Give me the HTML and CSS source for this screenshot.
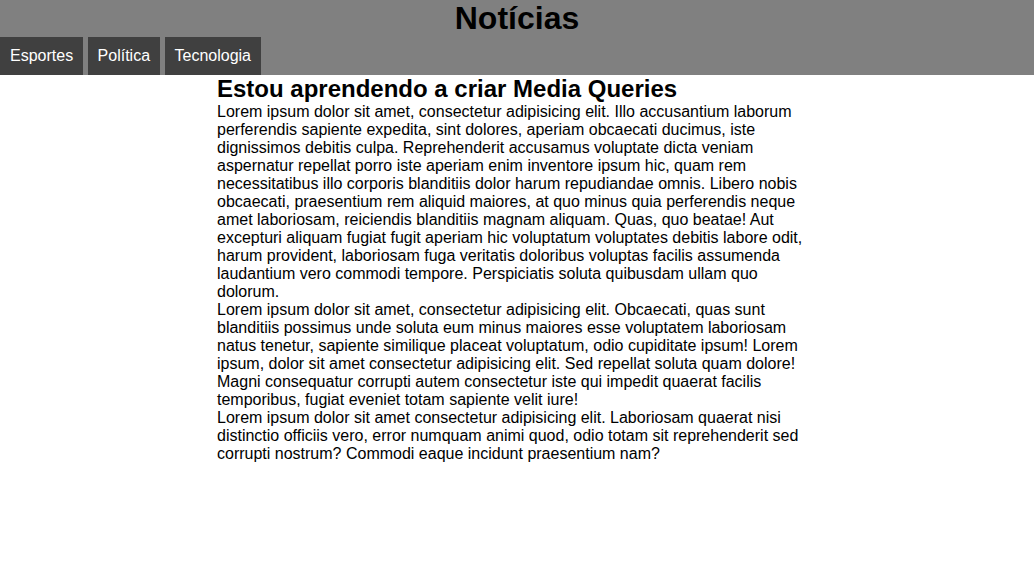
FILE: index.html
```html
<!DOCTYPE html>
<html lang="pt-BR">
<head>
<meta charset="utf-8">
<title>Notícias</title>
<link rel="stylesheet" href="styles.css">
</head>
<body>
<header class="topo">
  <h1 class="titulo">Notícias</h1>
  <nav class="menu"><a class="item" href="#">Esportes</a> <a class="item" href="#">Política</a> <a class="item" href="#">Tecnologia</a></nav>
</header>
<main class="conteudo">
  <h2 class="subtitulo">Estou aprendendo a criar Media Queries</h2>
  <p class="texto">Lorem ipsum dolor sit amet, consectetur adipisicing elit. Illo accusantium laborum perferendis sapiente expedita, sint dolores, aperiam obcaecati ducimus, iste dignissimos debitis culpa. Reprehenderit accusamus voluptate dicta veniam aspernatur repellat porro iste aperiam enim inventore ipsum hic, quam rem necessitatibus illo corporis blanditiis dolor harum repudiandae omnis. Libero nobis obcaecati, praesentium rem aliquid maiores, at quo minus quia perferendis neque amet laboriosam, reiciendis blanditiis magnam aliquam. Quas, quo beatae! Aut excepturi aliquam fugiat fugit aperiam hic voluptatum voluptates debitis labore odit, harum provident, laboriosam fuga veritatis doloribus voluptas facilis assumenda laudantium vero commodi tempore. Perspiciatis soluta quibusdam ullam quo dolorum.</p>
  <p class="texto">Lorem ipsum dolor sit amet, consectetur adipisicing elit. Obcaecati, quas sunt blanditiis possimus unde soluta eum minus maiores esse voluptatem laboriosam natus tenetur, sapiente similique placeat voluptatum, odio cupiditate ipsum! Lorem ipsum, dolor sit amet consectetur adipisicing elit. Sed repellat soluta quam dolore! Magni consequatur corrupti autem consectetur iste qui impedit quaerat facilis temporibus, fugiat eveniet totam sapiente velit iure!</p>
  <p class="texto">Lorem ipsum dolor sit amet consectetur adipisicing elit. Laboriosam quaerat nisi distinctio officiis vero, error numquam animi quod, odio totam sit reprehenderit sed corrupti nostrum? Commodi eaque incidunt praesentium nam?</p>
</main>
</body>
</html>
```

FILE: styles.css
```css
body {
  margin: 0;
  font-family: "Liberation Sans", Arial, sans-serif;
  font-size: 16px;
  color: #000;
  background: #fff;
}
.topo {
  background: #808080;
}
.titulo {
  margin: 0;
  font-size: 32px;
  font-weight: bold;
  text-align: center;
}
.menu {
  font-size: 16px;
}
.item {
  display: inline-block;
  background: #404040;
  color: #fff;
  text-decoration: none;
  padding: 10px;
}
.conteudo {
  width: 600px;
  margin: 0 auto;
}
.subtitulo {
  margin: 0;
  font-size: 24px;
  font-weight: bold;
}
.texto {
  margin: 0;
}
```
